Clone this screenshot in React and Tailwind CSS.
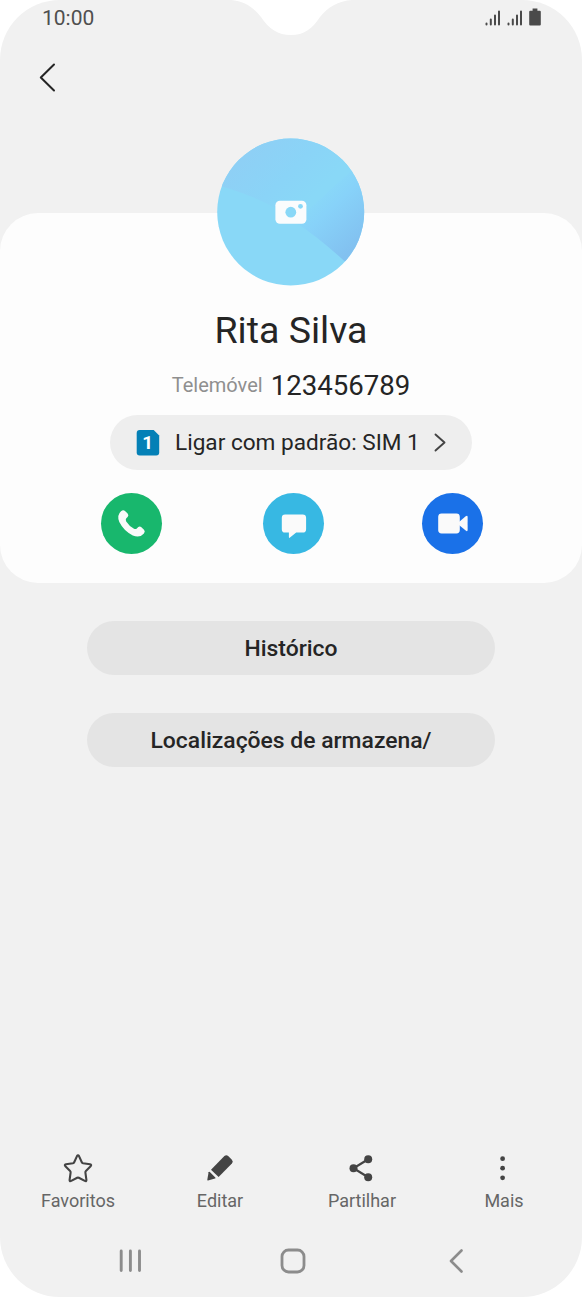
import React from 'react';

const Notch = () => (
  <svg className="absolute left-0 top-0" width="582" height="40" viewBox="0 0 582 40" fill="#ffffff">
    <path d="M231 0C244 1 253 7 261 17C269 29 278 35 291 35C304 35 312 29 320 17C328 7 338 1 352 0Z" />
  </svg>
);

const Signal = () => (
  <svg width="16" height="17" viewBox="0 0 16 17" stroke="#4a4a4a" strokeWidth="2" strokeLinecap="round">
    <path d="M1.5 13.6V14.6M5.8 9.4V14.6M10 5.4V14.6M14 1.5V14.6" />
  </svg>
);

const Battery = () => (
  <svg width="12" height="18" viewBox="0 0 12 18" fill="#4a4a4a">
    <path d="M3.6 0.5h4.8v2.2h2.4q1 0 1 1v12.9q0 1-1 1H1.2q-1 0-1-1V3.7q0-1 1-1h2.4z" />
  </svg>
);

const StatusBar = () => (
  <div className="flex h-9 justify-between pl-[42px] pr-[41px]">
    <span className="pt-[6px] text-[21px] leading-6 text-[#4f4f4f]">10:00</span>
    <div className="flex items-start gap-[6px] pt-[8px]">
      <div className="flex gap-[6px] pt-[2px]">
        <Signal />
        <Signal />
      </div>
      <Battery />
    </div>
  </div>
);

const Avatar = () => (
  <svg className="-mt-[75px] shrink-0" width="148" height="148" viewBox="0 0 148 148">
    <defs>
      <clipPath id="avatarClip">
        <circle cx="73.7" cy="74" r="73.5" />
      </clipPath>
      <linearGradient id="avatarTop" gradientUnits="userSpaceOnUse" x1="20" y1="15" x2="80" y2="75">
        <stop offset="0" stopColor="#8fcff5" />
        <stop offset="0.6" stopColor="#8ad4f7" />
        <stop offset="1" stopColor="#89d8f7" />
      </linearGradient>
      <linearGradient id="avatarSide" gradientUnits="userSpaceOnUse" x1="98" y1="60" x2="141" y2="105">
        <stop offset="0" stopColor="#89d8f8" />
        <stop offset="0.3" stopColor="#87d2f9" />
        <stop offset="1" stopColor="#82c1f0" />
      </linearGradient>
    </defs>
    <g clipPath="url(#avatarClip)">
      <rect width="148" height="148" fill="#89d8f7" />
      <path d="M0 47C30 55 56 67 80 83L148 20V0H0z" fill="url(#avatarTop)" />
      <path d="M78 84L148 20V143C126 121 104 101 78 84z" fill="url(#avatarSide)" />
    </g>
    <rect x="58.4" y="62.8" width="31" height="23" rx="4.5" fill="#fafcfd" />
    <circle cx="73.8" cy="74.2" r="5.4" fill="#89d8f7" />
    <circle cx="83.5" cy="68.3" r="2.4" fill="#89d8f7" />
  </svg>
);

const SimIcon = () => (
  <svg className="shrink-0" width="24" height="26" viewBox="0 0 24 26">
    <path d="M3.7 0H17.7L23.2 5.5V22.6Q23.2 25.6 20.2 25.6H3.7Q0.7 25.6 0.7 22.6V3Q0.7 0 3.7 0Z" fill="#0480b6" />
    <text x="11.6" y="19.3" textAnchor="middle" fill="#ffffff" className="text-[19px] font-bold">1</text>
  </svg>
);

const Phone = () => (
  <svg width="61" height="61" viewBox="0 0 61 61" fill="#fafafa">
    <path d="M20 18.3Q22.2 16.3 24 18L26.6 20.6Q28.2 22.3 26.6 23.9L25.3 25.2Q24.2 26.5 25.2 28.4Q28.2 33 33 35.8Q34.7 36.5 35.8 35.5L37.3 34Q38.8 32.7 40.4 34.2L43 36.8Q44.6 38.6 42.9 40.4Q38.7 45.4 31.8 42.4Q22.8 38 18.3 29Q15.5 22.3 20 18.3Z" />
  </svg>
);

const Message = () => (
  <svg width="61" height="61" viewBox="0 0 61 61" fill="#fafafa">
    <path d="M22.1 21.4H39.7Q43.1 21.4 43.1 24.8V36.2Q43.1 39.6 39.7 39.6H33.2L27 44.6Q25.9 45.4 25.9 44V39.6H22.1Q18.8 39.6 18.8 36.2V24.8Q18.8 21.4 22.1 21.4Z" />
  </svg>
);

const Video = () => (
  <svg width="61" height="61" viewBox="0 0 61 61" fill="#fafafa">
    <rect x="16.2" y="20.5" width="21.6" height="20" rx="3.4" />
    <path d="M37 29L43.7 23.3Q45.6 22 45.6 23.9V37Q45.6 38.9 43.7 37.6L37 32z" />
  </svg>
);

const contactActions = [
  { id: 'call', icon: Phone, color: 'bg-[#18b76d]' },
  { id: 'message', icon: Message, color: 'bg-[#37b8e3]' },
  { id: 'video', icon: Video, color: 'bg-[#1a71e8]' },
];

const ContactCard = () => (
  <section className="mt-[109px] flex h-[370px] flex-col items-center rounded-[38px] bg-[#fdfdfd]">
    <Avatar />
    <h1 className="mt-[21px] text-[37.5px] leading-[46px] text-[#252525]">Rita Silva</h1>
    <div className="mt-[15px] flex h-8 items-start gap-[8px]">
      <span className="pt-px text-[20px] leading-8 text-[#8f8f8f]">Telemóvel</span>
      <span className="pt-[2px] text-[27.6px] leading-8 text-[#252525]">123456789</span>
    </div>
    <button className="mt-[15px] flex h-[55px] w-[362px] items-center rounded-full bg-[#eeeeee] pl-[26px]">
      <SimIcon />
      <span className="ml-[15px] w-[244px] whitespace-nowrap pt-px text-left text-[22.6px] leading-7 text-[#252525]">
        Ligar com padrão: SIM 1
      </span>
      <svg className="ml-[15px]" width="12" height="20" viewBox="0 0 12 20" fill="none" stroke="#444444" strokeWidth="1.9" strokeLinecap="round" strokeLinejoin="round">
        <path d="M1.5 1.5L10.5 9.5L1.5 17.5" />
      </svg>
    </button>
    <div className="mt-[23px] flex w-full pl-[101px]">
      {contactActions.map(({ id, icon: Icon, color }) => (
        <button key={id} className={`mr-[101px] h-[61px] w-[61px] shrink-0 rounded-full last:-ml-[3px] last:mr-0 ${color}`}>
          <Icon />
        </button>
      ))}
    </div>
  </section>
);

const PillButton = ({ children }) => (
  <button className="h-[54px] w-[408px] rounded-full bg-[#e4e4e4] pt-[3px] text-[22.9px] font-medium text-[#252525]">
    {children}
  </button>
);

const Star = () => (
  <svg width="32" height="32" viewBox="0 0 32 32" fill="none" stroke="#444444" strokeWidth="2.1" strokeLinejoin="round">
    <path d="M15 4.1Q16 2.3 17 4.1L19.8 10.2Q20.1 11.1 21.1 11.3L28 12.3Q30 12.9 28.6 14.3L23.9 19Q23.2 19.7 23.4 20.7L24.4 27.8Q24.6 29.7 22.8 28.9L16.8 25.8Q16 25.4 15.2 25.8L9.2 28.9Q7.4 29.7 7.6 27.8L8.6 20.7Q8.8 19.7 8.1 19L3.4 14.3Q2 12.9 4 12.3L10.9 11.3Q11.9 11.1 12.2 10.2Z" />
  </svg>
);

const Pencil = () => (
  <svg width="32" height="32" viewBox="0 0 32 32" fill="#444444">
    <path d="M7 17.7L20.4 4.1Q22.3 2.3 24.2 4.1L27.9 7.8Q29.7 9.7 27.9 11.6L14.6 24.9Z" />
    <path d="M4.6 20.3Q5 19.4 5.8 20.1L11.3 25.5Q12 26.3 11 26.6L4 28.6Q3.2 28.7 3.3 27.8z" />
  </svg>
);

const Share = () => (
  <svg width="32" height="32" viewBox="0 0 32 32" fill="#444444">
    <path d="M22.2 7.3L7.5 16.3L22.2 25.2" fill="none" stroke="#444444" strokeWidth="2.2" />
    <circle cx="22.2" cy="7.3" r="4" />
    <circle cx="7.5" cy="16.3" r="4" />
    <circle cx="22.2" cy="25.2" r="4" />
  </svg>
);

const More = () => (
  <svg width="32" height="32" viewBox="0 0 32 32" fill="#444444">
    <circle cx="14.6" cy="6.7" r="2.4" />
    <circle cx="14.6" cy="16.2" r="2.4" />
    <circle cx="14.6" cy="25.8" r="2.4" />
  </svg>
);

const toolbarItems = [
  { label: 'Favoritos', icon: Star },
  { label: 'Editar', icon: Pencil },
  { label: 'Partilhar', icon: Share },
  { label: 'Mais', icon: More },
];

const Toolbar = () => (
  <nav className="mt-auto grid grid-cols-4 px-[7px]">
    {toolbarItems.map(({ label, icon: Icon }) => (
      <button key={label} className="flex flex-col items-center">
        <Icon />
        <span className="mt-[6px] text-[18px] leading-[22px] text-[#666666]">{label}</span>
      </button>
    ))}
  </nav>
);

const NavigationBar = () => (
  <div className="mt-[33px] flex h-[52px] items-start pl-[118px]">
    <svg width="26" height="30" viewBox="0 0 26 30" stroke="#8c8c8c" strokeWidth="2.9" strokeLinecap="round">
      <path d="M3.2 6V25.5M12.4 6V25.5M21.5 6V25.5" />
    </svg>
    <svg className="ml-[136px]" width="26" height="30" viewBox="0 0 26 30" fill="none" stroke="#8c8c8c" strokeWidth="2.8">
      <rect x="2" y="5" width="22" height="22" rx="6.5" />
    </svg>
    <svg className="ml-[142px]" width="16" height="30" viewBox="0 0 16 30" fill="none" stroke="#8c8c8c" strokeWidth="2.6" strokeLinecap="round" strokeLinejoin="round">
      <path d="M13.5 5.5L3 16L13.5 26.5" />
    </svg>
  </div>
);

export default function App() {
  return (
    <div className="bg-white font-['Roboto',sans-serif]">
      <div className="relative flex h-[1297px] w-[582px] flex-col overflow-hidden rounded-[60px] bg-[#f1f1f1]">
        <Notch />
        <StatusBar />
        <header className="flex h-[68px] pl-[38px] pt-[26px]">
          <svg width="20" height="32" viewBox="0 0 20 32" fill="none" stroke="#252525" strokeWidth="2" strokeLinecap="round" strokeLinejoin="round">
            <path d="M16 2.5L2.8 15.5L16 28.5" />
          </svg>
        </header>
        <ContactCard />
        <div className="mt-[38px] flex flex-col items-center gap-[38px]">
          <PillButton>Histórico</PillButton>
          <PillButton>Localizações de armazena/</PillButton>
        </div>
        <Toolbar />
        <NavigationBar />
      </div>
    </div>
  );
}
